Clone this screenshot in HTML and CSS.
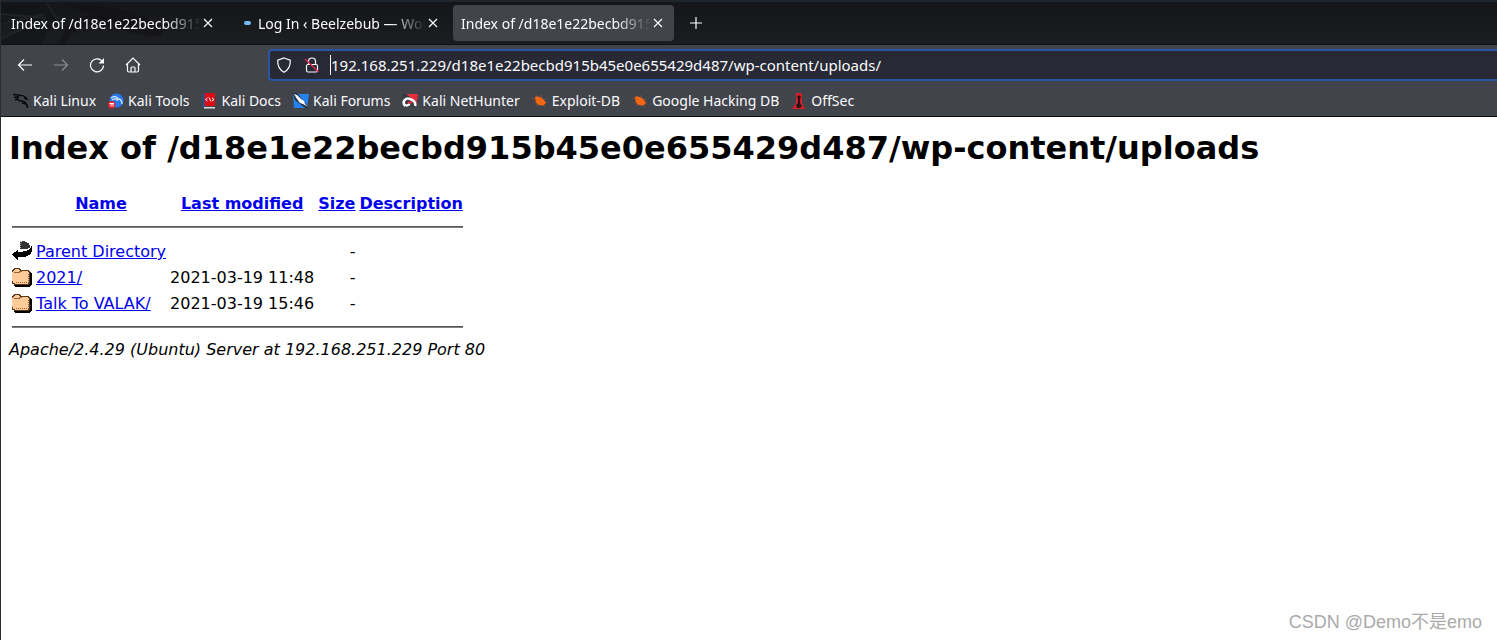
FILE: index.html
```html
<!DOCTYPE html>
<html lang="en">
<head>
<meta charset="utf-8">
<title>Index of /d18e1e22becbd915b45e0e655429d487/wp-content/uploads</title>
<link rel="stylesheet" href="styles.css">
</head>
<body>
<div class="window">
<header class="chrome">
  <div class="tabbar">
    <svg class="dragon" width="190" height="42" viewBox="0 0 190 42" fill="#101115" aria-hidden="true">
      <path d="M0 3h46l12 14 8 10-14-7-12 22H0v-3l31-18L0 22v-3l28-6L0 12z" opacity=".5"/>
      <path d="M60 2c34 1 68 5 88 16l15 11-4 6-27-4-24-7c-16-4-34-2-44 18h-6c5-19 18-29 34-28L82 10c-8-4-16-6-22-8z" opacity=".6"/>
      <path d="M95 9l1 5 7-1 2 4 8-1 2 3 10-1 9 6-22-3-17-8z"/>
      <path d="M0 12l45 4M0 22l43-10M0 36l44-18M46 2l14 21" stroke="#202227" stroke-width="2" fill="none"/>
    </svg>
    <div class="tab">
      <span class="tab-title">Index of /d18e1e22becbd915b</span>
      <button class="close" aria-label="Close tab"><svg width="10" height="10" viewBox="0 0 10 10"><path d="M1 1l8 8M9 1L1 9"/></svg></button>
    </div>
    <div class="tab">
      <span class="loading"></span>
      <span class="tab-title">Log In ‹ Beelzebub — Wor</span>
      <button class="close" aria-label="Close tab"><svg width="10" height="10" viewBox="0 0 10 10"><path d="M1 1l8 8M9 1L1 9"/></svg></button>
    </div>
    <div class="tab active">
      <span class="tab-title">Index of /d18e1e22becbd915b</span>
      <button class="close" aria-label="Close tab"><svg width="10" height="10" viewBox="0 0 10 10"><path d="M1 1l8 8M9 1L1 9"/></svg></button>
    </div>
    <button class="new-tab" aria-label="New tab"><svg width="14" height="14" viewBox="0 0 14 14"><path d="M7 1v12M1 7h12"/></svg></button>
  </div>
  <div class="toolbar">
    <nav class="nav">
      <button aria-label="Back"><svg width="16" height="16" viewBox="0 0 16 16"><path d="M15 8H1.500M7 2.500L1.500 8 7 13.500"/></svg></button>
      <button aria-label="Forward" disabled><svg width="16" height="16" viewBox="0 0 16 16"><path d="M1 8h13.500M9 2.500L14.500 8 9 13.500"/></svg></button>
      <button aria-label="Reload"><svg width="16" height="16" viewBox="0 0 16 16"><path d="M13.600 5A6.500 6.500 0 1 0 14.500 8.500"/><path d="M15 1v5.500H9.500z" fill="#fbfbfe" stroke="none"/></svg></button>
      <button aria-label="Home"><svg width="16" height="16" viewBox="0 0 16 16"><path d="M1 8l7-7 7 7M2.500 7v6.500q0 1.500 1.500 1.500h8q1.500 0 1.500-1.500V7M6 15v-4q0-1 1-1h2q1 0 1 1v4"/></svg></button>
    </nav>
    <div class="urlbar">
      <svg width="16" height="16" viewBox="0 0 16 16"><path d="M8 1L14.300 3.200C14.500 8 12.500 12.800 8 15.200 3.500 12.800 1.500 8 1.700 3.200z"/></svg>
      <svg width="16" height="16" viewBox="0 0 16 16"><path d="M4.500 7V4.500a3.500 3.500 0 0 1 7 0V7M4 7.500h8q1.500 0 1.500 1.500v4.500q0 1.500-1.500 1.500H4q-1.500 0-1.500-1.500V9q0-1.500 1.500-1.500"/><path d="M1 2l13.500 13" stroke="#e22850" stroke-width="1.500"/></svg>
      <div class="address">
        <span class="caret"></span>
        <input type="text" aria-label="Address" value="192.168.251.229/d18e1e22becbd915b45e0e655429d487/wp-content/uploads/">
      </div>
    </div>
  </div>
  <nav class="bookmarks">
    <a href="#"><svg width="16" height="16" viewBox="0 0 16 16" fill="none" stroke="#08090a"><path d="M0 1.500l6 .5M1 4.500l5-1M6 2.500c-3 3-1 5 2 5.500 4 0 6 2 6.500 7" stroke-width="1.500"/><path d="M5 2.500c4-.5 7 0 9 3.500l-3-1M2 7l3-1M9 10l4 1" stroke-width="1.400"/></svg>Kali Linux</a>
    <a href="#"><svg width="16" height="16" viewBox="0 0 16 16"><circle cx="8.500" cy="7.500" r="7" fill="#2777ee"/><path d="M3 5c5-3 7 0 7 1 3 0 4 2 4 5M4 7c3-2 6-1 5 1" fill="none" stroke="#d8eaff" stroke-width="1.300"/><circle cx="3.700" cy="11.800" r="3.700" fill="#e3202b"/><path d="M1.500 10.500h4.500M3 10.500v3M5 10.500v3" stroke="#fff"/></svg>Kali Tools</a>
    <a href="#"><svg width="16" height="16" viewBox="0 0 16 16"><path d="M1 1l2-1v14H1z" fill="#1259a9"/><path d="M2.500 0H13v13H2.500z" fill="#dd0c14"/><path d="M2 14h11v1.500H2z" fill="#ddd"/><path d="M5.500 5L3.500 6.500l2 1.500M7 4.500l2 4M10 5l2 1.500-2 1.500" fill="none" stroke="#fff"/></svg>Kali Docs</a>
    <a href="#"><svg width="16" height="16" viewBox="0 0 16 16"><path d="M0 1h16l-2 14H1z" fill="#2581ec"/><path d="M0 0h4l12 15h-4L2 7z" fill="#26333e"/><path d="M1 1l3 1 4 4 3 2 1 3 3 3-5-3-3-1-3-4z" fill="#fff"/></svg>Kali Forums</a>
    <a href="#"><svg width="16" height="16" viewBox="0 0 16 16"><path d="M4 1h12l-2 13H6z" fill="#e52d3e"/><path d="M0 1h4l9 7 2 6H6z" fill="#333b42"/><path d="M3.500 13C-1 9 4 4 8 6c4 1 6 4 5 7M4 13l4-2" fill="none" stroke="#fff" stroke-width="2.500"/><path d="M5 9l4-1 2 2-4 1z" fill="#e52d3e"/></svg>Kali NetHunter</a>
    <a href="#"><svg width="16" height="16" viewBox="0 0 16 16"><path d="M0 5l5 2M4 2l2 3M9 2v4M14 6l-5 2M2 10l4-2M4 13l4-3M10 11l3 3M12 9h3" stroke="#9c512f" stroke-width=".8"/><path d="M3 4c2-1 6 0 8 2l3 4-2 2c-3 1-7 0-8-3z" fill="#f26713"/></svg>Exploit-DB</a>
    <a href="#"><svg width="16" height="16" viewBox="0 0 16 16"><path d="M0 5l5 2M4 2l2 3M9 2v4M14 6l-5 2M2 10l4-2M4 13l4-3M10 11l3 3M12 9h3" stroke="#9c512f" stroke-width=".8"/><path d="M3 4c2-1 6 0 8 2l3 4-2 2c-3 1-7 0-8-3z" fill="#f26713"/></svg>Google Hacking DB</a>
    <a href="#"><svg width="16" height="16" viewBox="0 0 16 16"><path d="M5 0h6v10l3 6H1l4-6z" fill="#d51e29"/><path d="M8 2l2 2-1 2v4l2 3-2 2H6l-1-3 2-2V6L6 4z" fill="#25151a"/></svg>OffSec</a>
  </nav>
</header>
<main class="page">
  <h1>Index of /d18e1e22becbd915b45e0e655429d487/wp-content/uploads</h1>
  <table>
    <tr><th class="icon"></th><th><a href="#">Name</a></th><th><a href="#">Last modified</a></th><th><a href="#">Size</a></th><th><a href="#">Description</a></th></tr>
    <tr><th colspan="5"><hr></th></tr>
    <tr>
      <td class="icon"><svg width="20" height="22" viewBox="0 0 20 22" shape-rendering="crispEdges"><path d="M8 2h2v-1h3v1h2v1h2v2h1v3h-2v1H8z" fill="#333"/><path d="M8.500 1v7" stroke="#aaa" stroke-dasharray="1 1"/><path d="M19 6h1v6h-1v2h-1v1h-2v1h-2v1H6v3H5v-1H4v-1H3v-1H2v-1H1v-1H0v-1h1v-1h1v-1h2v-1h1v-1h1v2h5v-1h4v-1h2V9h1V8h1z" fill="#000"/></svg></td>
      <td><a href="#">Parent Directory</a></td><td></td><td class="size">-</td><td></td>
    </tr>
    <tr>
      <td class="icon"><svg width="20" height="22" viewBox="0 0 20 22" shape-rendering="crispEdges"><path d="M3 5h15v1h1v1h1v12h-1v1h-1v1H3v-1H2V6h1z" fill="#000"/><path d="M1.500 3.500h1v-1h5v1h1v1h8v1h1v12h-1v1h-14v-1h-2v-2h-1v-10h1z" fill="#fc9" stroke="#59351a"/><path d="M2 6.500h5.500v-1h2" fill="none" stroke="#99603a"/><path d="M4 16.500h12M16.500 8v9" stroke="#99603a" stroke-dasharray="1 1"/></svg></td>
      <td><a href="#">2021/</a></td><td>2021-03-19 11:48</td><td class="size">-</td><td></td>
    </tr>
    <tr>
      <td class="icon"><svg width="20" height="22" viewBox="0 0 20 22" shape-rendering="crispEdges"><path d="M3 5h15v1h1v1h1v12h-1v1h-1v1H3v-1H2V6h1z" fill="#000"/><path d="M1.500 3.500h1v-1h5v1h1v1h8v1h1v12h-1v1h-14v-1h-2v-2h-1v-10h1z" fill="#fc9" stroke="#59351a"/><path d="M2 6.500h5.500v-1h2" fill="none" stroke="#99603a"/><path d="M4 16.500h12M16.500 8v9" stroke="#99603a" stroke-dasharray="1 1"/></svg></td>
      <td><a href="#">Talk To VALAK/</a></td><td>2021-03-19 15:46</td><td class="size">-</td><td></td>
    </tr>
    <tr><th colspan="5"><hr></th></tr>
  </table>
  <address>Apache/2.4.29 (Ubuntu) Server at 192.168.251.229 Port 80</address>
</main>
</div>
<div class="watermark">CSDN @Demo不是emo</div>
</body>
</html>
```
FILE: styles.css
```css
* { box-sizing: border-box; }
body { margin: 0; background: #fff; }
.window { min-height: 100vh; border-left: 1px solid #2b2c30; }
.chrome {
  background: #42444c;
  border-bottom: 1px solid #0c0c0d;
  color: #fbfbfe;
  font: 14px/20px "Noto Sans", sans-serif;
  overflow: hidden;
}
button { border: 0; padding: 0; background: none; display: flex; align-items: center; justify-content: center; }
svg { display: block; flex: none; }
.chrome button svg, .urlbar > svg { fill: none; stroke: #fbfbfe; stroke-width: 1.2; }
.tabbar {
  position: relative;
  display: flex;
  gap: 4px;
  height: 45px;
  padding: 3px 2px 4px;
  border-top: 2px solid #1e252c;
  border-bottom: 1px solid #101114;
  background: linear-gradient(#15161a, #1c1d21);
}
.dragon { position: absolute; left: 0; top: 0; }
.tab { position: relative; display: flex; align-items: center; width: 221px; height: 36px; padding: 0 9px 0 8px; border-radius: 4px; }
.active { background: #42444c; }
.tab-title {
  flex: 1;
  min-width: 0;
  padding-top: 2px;
  overflow: hidden;
  white-space: nowrap;
  -webkit-mask-image: linear-gradient(to left, transparent, #000 36px);
  mask-image: linear-gradient(to left, transparent, #000 36px);
}
.close { width: 14px; height: 20px; flex: none; }
.loading { width: 7px; height: 4px; margin: 0 7px 0 8px; border-radius: 2px; background: #75baf5; }
.new-tab { width: 35px; height: 36px; }
.toolbar { display: flex; align-items: center; height: 40px; }
.nav { display: flex; gap: 4px; width: 267px; padding-left: 8px; }
.nav button { width: 32px; height: 32px; }
.nav button:disabled { opacity: .4; }
.urlbar {
  display: flex;
  flex: 1;
  align-items: center;
  gap: 12px;
  height: 32px;
  padding-left: 6px;
  border: 2px solid #2856a5;
  border-right: 0;
  border-radius: 4px 0 0 4px;
  background: #272934;
}
.address { display: flex; flex: 1; margin-left: -2px; }
.caret { width: 1px; height: 20px; background: #fff; }
.address input { flex: 1; min-width: 0; padding: 0; border: 0; outline: 0; background: none; color: #fbfbfe; font: 15px/20px "Noto Sans", sans-serif; }
.bookmarks { display: flex; align-items: center; gap: 12px; height: 31px; padding-left: 12px; }
.bookmarks a { display: flex; align-items: center; gap: 4px; color: #fbfbfe; text-decoration: none; white-space: nowrap; }
.page { padding: 12px 8px; color: #000; font: 16px/20px "DejaVu Sans", sans-serif; }
h1 { margin: 0 0 24px; font-size: 32px; line-height: 38px; }
.page a { color: #0000ee; text-decoration: underline; }
table { border-spacing: 2px; }
td, th { padding: 1px; white-space: nowrap; }
td { padding-top: 2px; line-height: 21px; }
td.icon { padding: 1px; }
.icon { width: 22px; }
.size { text-align: right; }
hr { height: 2px; margin: 8px 0; border: 0; border-top: 1px solid #555; background: #808080; }
address { padding-top: 1px; font-style: italic; }
.watermark { position: absolute; right: 15px; bottom: 6px; color: #aaa; font: 18px/24px "Liberation Sans", "Noto Sans CJK SC", sans-serif; }
```
